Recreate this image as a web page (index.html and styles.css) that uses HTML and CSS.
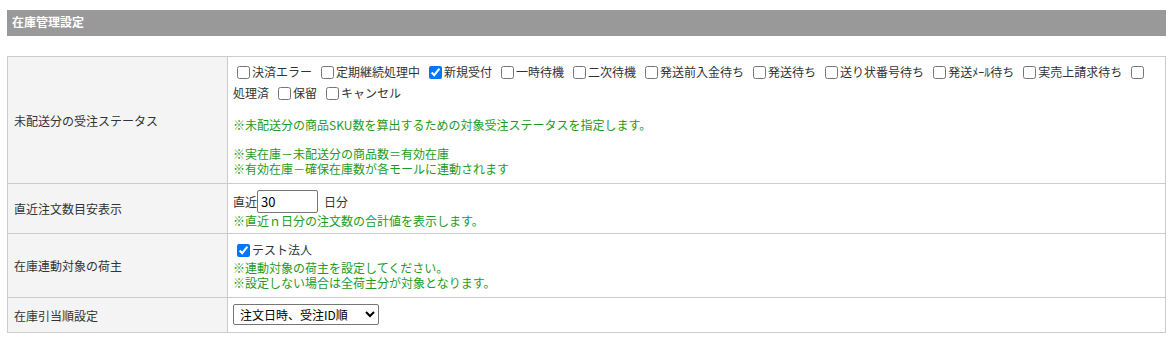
FILE: index.html
```html
<!DOCTYPE html>
<html lang="ja">
<head>
<meta charset="utf-8">
<title>在庫管理設定</title>
<link rel="stylesheet" href="styles.css">
</head>
<body>
<div class="page">
  <div class="section-title">在庫管理設定</div>
  <table class="settings">
    <tr class="row-status">
      <th>未配送分の受注ステータス</th>
      <td>
        <div class="checks"><label><input type="checkbox"><span class="t">決済エラー</span></label><label><input type="checkbox"><span class="t">定期継続処理中</span></label><label><input type="checkbox" checked><span class="t">新規受付</span></label><label><input type="checkbox"><span class="t">一時待機</span></label><label><input type="checkbox"><span class="t">二次待機</span></label><label><input type="checkbox"><span class="t">発送前入金待ち</span></label><label><input type="checkbox"><span class="t">発送待ち</span></label><label><input type="checkbox"><span class="t">送り状番号待ち</span></label><label><input type="checkbox"><span class="t">発送ﾒｰﾙ待ち</span></label><label><input type="checkbox"><span class="t">実売上請求待ち</span></label><label><input type="checkbox"><span class="t">処理済</span></label><label><input type="checkbox"><span class="t">保留</span></label><label><input type="checkbox"><span class="t">キャンセル</span></label></div>
        <p class="note note-gap">※未配送分の商品SKU数を算出するための対象受注ステータスを指定します。</p>
        <p class="note note-gap">※実在庫－未配送分の商品数＝有効在庫<br>※有効在庫－確保在庫数が各モールに連動されます</p>
      </td>
    </tr>
    <tr class="row-days">
      <th>直近注文数目安表示</th>
      <td>
        <div class="days"><span>直近</span><input type="text" class="num" value="30"><span>日分</span></div>
        <p class="note">※直近ｎ日分の注文数の合計値を表示します。</p>
      </td>
    </tr>
    <tr class="row-owner">
      <th>在庫連動対象の荷主</th>
      <td>
        <label class="owner"><input type="checkbox" checked><span class="t">テスト法人</span></label>
        <p class="note">※連動対象の荷主を設定してください。<br>※設定しない場合は全荷主分が対象となります。</p>
      </td>
    </tr>
    <tr class="row-order">
      <th>在庫引当順設定</th>
      <td>
        <select class="order-select">
          <option>注文日時、受注ID順</option>
          <option>受注ID順</option>
        </select>
      </td>
    </tr>
  </table>
</div>
</body>
</html>
```

FILE: styles.css
```css
html, body {
  margin: 0;
  padding: 0;
  background: #fff;
}
body {
  font-family: "Noto Sans CJK JP", "Noto Sans", sans-serif;
  font-size: 12px;
  color: #333;
}
.page {
  padding: 10px 9px 0 7px;
}
.section-title {
  background: #999;
  color: #fff;
  font-weight: bold;
  font-size: 12px;
  height: 26px;
  line-height: 24px;
  padding-left: 5px;
  margin-bottom: 20px;
}
.settings {
  width: 100%;
  border-collapse: collapse;
}
.settings th,
.settings td {
  border: 1px solid #ccc;
  text-align: left;
  vertical-align: middle;
}
.settings th {
  width: 207px;
  background: #f3f4f3;
  font-weight: normal;
  padding: 0 6px;
  color: #333;
}
.settings td {
  padding: 6px 5px;
}
.row-status td {
  padding-top: 4px;
  padding-bottom: 7px;
}
.row-days td {
  padding-bottom: 5px;
}
.checks {
  line-height: 21px;
}
.checks label {
  margin-right: 5px;
}
.t {
  white-space: nowrap;
}
.checks input,
.owner input {
  width: 13px;
  height: 13px;
  margin: 0 2px 0 4px;
  vertical-align: -2px;
}
.note {
  margin: 0;
  color: #1e9a1e;
  line-height: 15px;
}
.note-gap {
  margin-top: 14px;
}
.days {
  display: flex;
  align-items: center;
  height: 23px;
}
.num {
  width: 53px;
  height: 19px;
  box-sizing: content-box;
  padding: 1px 3px;
  border: 1px solid #767676;
  border-radius: 2px;
  font: inherit;
  font-size: 13px;
  color: #000;
  margin: 0 6px 0 0;
}
.owner {
  display: block;
  line-height: 20px;
}
.row-owner td {
  padding-bottom: 7px;
}
.row-order td {
  padding-bottom: 7px;
}
.order-select {
  width: 146px;
  height: 21px;
  font: inherit;
  color: #000;
  border: 1px solid #767676;
  border-radius: 2px;
  padding: 0 2px;
  background: #fff;
  vertical-align: middle;
}
```
